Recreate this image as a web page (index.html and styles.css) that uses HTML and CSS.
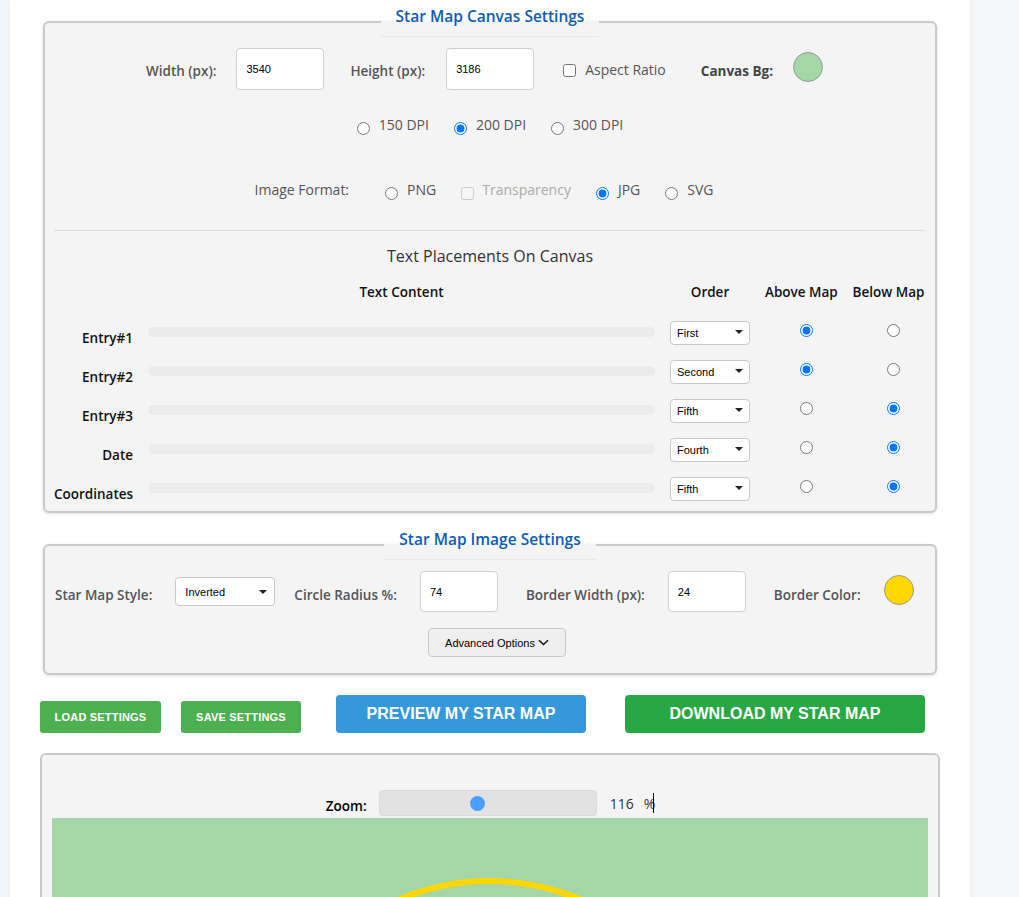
FILE: index.html
```html
<!DOCTYPE html>
<html>
<head>
<meta charset="utf-8">
<title>Star Map</title>
<link rel="stylesheet" href="styles.css">
</head>
<body>
<div class="page">
  <fieldset class="panel panel-canvas">
    <legend align="center">Star Map Canvas Settings</legend>
    <div class="row size-row">
      <label class="lbl strong" for="cw">Width (px):</label>
      <input class="num" id="cw" type="text" value="3540">
      <label class="lbl strong ml6" for="ch">Height (px):</label>
      <input class="num ml1" id="ch" type="text" value="3186">
      <label class="opt check ml9"><input type="checkbox"><span>Aspect Ratio</span></label>
      <span class="lbl bold ml15">Canvas Bg:</span>
      <span class="swatch swatch-green"></span>
    </div>
    <div class="row dpi-row">
      <label class="opt"><input type="radio" name="dpi"><span>150 DPI</span></label>
      <label class="opt"><input type="radio" name="dpi" checked><span>200 DPI</span></label>
      <label class="opt"><input type="radio" name="dpi"><span>300 DPI</span></label>
    </div>
    <div class="row format-row">
      <span class="lbl fmt-lbl">Image Format:</span>
      <label class="opt"><input type="radio" name="fmt"><span>PNG</span></label>
      <label class="opt disabled"><input type="checkbox" disabled><span>Transparency</span></label>
      <label class="opt"><input type="radio" name="fmt" checked><span>JPG</span></label>
      <label class="opt"><input type="radio" name="fmt"><span>SVG</span></label>
    </div>
    <hr class="divider">
    <h3 class="subtitle">Text Placements On Canvas</h3>
    <div class="placements">
      <div class="ph"></div>
      <div class="ph">Text Content</div>
      <div class="ph">Order</div>
      <div class="ph">Above Map</div>
      <div class="ph">Below Map</div>

      <div class="entry">Entry#1</div>
      <input class="bar" type="text">
      <div class="sel sel-sm"><select><option>First</option></select></div>
      <div class="rad"><input type="radio" name="p1" checked></div>
      <div class="rad"><input type="radio" name="p1"></div>

      <div class="entry">Entry#2</div>
      <input class="bar" type="text">
      <div class="sel sel-sm"><select><option>Second</option></select></div>
      <div class="rad"><input type="radio" name="p2" checked></div>
      <div class="rad"><input type="radio" name="p2"></div>

      <div class="entry">Entry#3</div>
      <input class="bar" type="text">
      <div class="sel sel-sm"><select><option>Fifth</option></select></div>
      <div class="rad"><input type="radio" name="p3"></div>
      <div class="rad"><input type="radio" name="p3" checked></div>

      <div class="entry">Date</div>
      <input class="bar" type="text">
      <div class="sel sel-sm"><select><option>Fourth</option></select></div>
      <div class="rad"><input type="radio" name="p4"></div>
      <div class="rad"><input type="radio" name="p4" checked></div>

      <div class="entry">Coordinates</div>
      <input class="bar" type="text">
      <div class="sel sel-sm"><select><option>Fifth</option></select></div>
      <div class="rad"><input type="radio" name="p5"></div>
      <div class="rad"><input type="radio" name="p5" checked></div>
    </div>
  </fieldset>

  <fieldset class="panel panel-image">
    <legend align="center">Star Map Image Settings</legend>
    <div class="row image-row">
      <span class="lbl strong">Star Map Style:</span>
      <div class="sel sel-lg"><select><option>Inverted</option></select></div>
      <span class="lbl strong">Circle Radius %:</span>
      <input class="num num-sm" type="text" value="74">
      <span class="lbl strong">Border Width (px):</span>
      <input class="num num-sm" type="text" value="24">
      <span class="lbl strong">Border Color:</span>
      <span class="swatch swatch-gold"></span>
    </div>
    <div class="row adv-row">
      <button class="adv-btn" type="button">Advanced Options
        <svg width="11" height="7" viewBox="0 0 11 7"><path d="M1 1.2 L5.5 5.6 L10 1.2" fill="none" stroke="#111" stroke-width="1.4"/></svg>
      </button>
    </div>
  </fieldset>

  <div class="actions">
    <button class="btn btn-sm" type="button">LOAD SETTINGS</button>
    <button class="btn btn-sm btn-save" type="button">SAVE SETTINGS</button>
    <button class="btn btn-lg btn-preview" type="button">PREVIEW MY STAR MAP</button>
    <button class="btn btn-lg btn-download" type="button">DOWNLOAD MY STAR MAP</button>
  </div>

  <div class="preview">
    <div class="zoom-row">
      <span class="zoom-lbl">Zoom:</span>
      <input class="zoom-range" type="range" min="25" max="228" value="116">
      <span class="zoom-val">116</span>
      <span class="zoom-pct">%</span><span class="caret"></span>
    </div>
    <div class="canvas">
      <svg width="876" height="700" viewBox="0 0 876 700">
        <circle cx="438" cy="297" r="234" fill="none" stroke="#ffd700" stroke-width="6"/>
      </svg>
    </div>
  </div>
</div>
</body>
</html>
```

FILE: styles.css
```css
* { box-sizing: border-box; }

html { overflow: hidden; }

body {
  margin: 0;
  background: #f5f6f8;
  font-family: "Open Sans", "Liberation Sans", sans-serif;
  color: #555;
}

.page {
  width: 960px;
  margin-left: 10px;
  min-height: 100vh;
  background: #fff;
  padding: 7px 30px 0;
  box-shadow: 0 0 6px rgba(0, 0, 0, 0.04);
}

.panel {
  margin: 0 3px;
  padding: 11px 0 2px;
  min-width: 0;
  border: 2px solid #cacaca;
  border-radius: 6px;
  background: #f4f4f4;
  box-shadow: 0 1px 3px rgba(0, 0, 0, 0.12);
}

.panel legend {
  margin: 0 auto;
  padding: 0 15px 11px;
  font-size: 15.5px;
  line-height: 18px;
  font-weight: 600;
  color: #0b5cb5;
  border-bottom: 1px solid #e8e8e8;
}

.panel-image { margin-top: 17px; padding-bottom: 16px; }

.row { display: flex; align-items: center; }

.lbl { font-size: 14px; color: #555; white-space: nowrap; }
.strong { font-weight: 600; font-size: 13.5px; margin-top: 3px; }
.bold { font-weight: 700; font-size: 13.5px; color: #444; margin-top: 3px; }

.ml1 { margin-left: 1px; }
.ml6 { margin-left: 6px; }
.ml9 { margin-left: 9px; }
.ml15 { margin-left: 15px; }

.num {
  width: 88px;
  height: 42px;
  border: 1px solid #cfcfcf;
  border-radius: 4px;
  background: #fff;
  padding: 0 9px;
  font: 11px "Liberation Sans", Arial, sans-serif;
  color: #000;
}
.num-sm { width: 78px; height: 41px; }

.swatch {
  width: 30px;
  height: 30px;
  border-radius: 50%;
  border: 1px solid #999;
}
.swatch-green { background: #a5d6a7; margin-top: -5px; }
.swatch-gold { background: #ffd700; margin-top: -3px; }

.size-row { height: 42px; gap: 20px; justify-content: center; padding-right: 11px; }

.opt {
  display: flex;
  align-items: center;
  gap: 9px;
  font-size: 14px;
  color: #555;
  white-space: nowrap;
}
.opt input { margin: 8px 0 0; width: 13px; height: 13px; }
.opt.check input { margin-top: 3px; }
.opt.disabled { color: #aaa; gap: 8px; }

.dpi-row { margin-top: 23px; height: 22px; gap: 25px; justify-content: center; }

.format-row { margin-top: 43px; height: 22px; gap: 25px; justify-content: center; padding-right: 12px; }
.fmt-lbl { margin-right: 11px; }

.divider {
  margin: 30px 10px 0 9px;
  border: 0;
  border-top: 1px solid #dcdcdc;
}

.subtitle {
  margin: 14px 0 0;
  font-size: 16px;
  line-height: 22px;
  font-weight: 400;
  color: #333;
  text-align: center;
}

.placements {
  margin: 13px 10px 0 9px;
  display: grid;
  grid-template-columns: 79px 507px 80px 72px 73px;
  grid-template-rows: 34px repeat(5, 39px);
  column-gap: 15px;
}

.ph {
  align-self: start;
  font-size: 13.5px;
  line-height: 24px;
  font-weight: 600;
  color: #111;
  text-align: center;
  white-space: nowrap;
}

.entry {
  align-self: center;
  margin-top: 8px;
  text-align: right;
  font-size: 13.5px;
  font-weight: 600;
  color: #111;
  white-space: nowrap;
}

.bar {
  align-self: center;
  margin-top: -4px;
  width: 100%;
  height: 10px;
  border: 0;
  border-radius: 5px;
  background: #ebebeb;
  padding: 0;
}

.sel { position: relative; align-self: center; }
.sel select {
  appearance: none;
  -webkit-appearance: none;
  width: 100%;
  height: 100%;
  border: 1px solid #c8c8c8;
  border-radius: 4px;
  background: #fff;
  font: 11px "Liberation Sans", Arial, sans-serif;
  color: #000;
  padding: 0 0 0 6px;
  margin: 0;
}
.sel::after {
  content: "";
  position: absolute;
  top: 50%;
  right: 7px;
  margin-top: -2px;
  border-left: 4px solid transparent;
  border-right: 4px solid transparent;
  border-top: 4px solid #222;
  pointer-events: none;
}
.sel-sm { width: 80px; height: 24px; margin-top: -4px; }
.sel-lg { width: 100px; height: 29px; margin-right: -4px; }
.sel-lg select { padding-left: 9px; }
.sel-lg::after { right: 8px; }

.rad {
  display: flex;
  justify-content: center;
  align-items: center;
  align-self: center;
  margin-top: -6px;
  padding-left: 10px;
}
.rad input { margin: 0; width: 13px; height: 13px; }

.image-row { height: 41px; gap: 23px; padding-left: 10px; }
.image-row .strong { margin-top: 6px; }
.image-row .num-sm { margin-right: 5px; }

.adv-row { margin-top: 16px; justify-content: center; padding-left: 14px; }
.adv-btn {
  display: inline-flex;
  align-items: center;
  justify-content: center;
  gap: 3px;
  width: 138px;
  height: 29px;
  border: 1px solid #c8c8c8;
  border-radius: 4px;
  background: #efefef;
  font: 11px "Liberation Sans", Arial, sans-serif;
  color: #000;
  padding: 0;
}

.actions {
  margin-top: 20px;
  display: flex;
  align-items: flex-end;
}

.btn {
  border: 0;
  color: #fff;
  font-family: "Liberation Sans", Arial, sans-serif;
  font-weight: 700;
  padding: 0;
}
.btn-sm {
  width: 121px;
  height: 32px;
  border-radius: 3px;
  background: #4caf50;
  font-size: 11px;
  letter-spacing: 0.2px;
  margin-right: 20px;
}
.btn-save { width: 120px; margin-right: 35px; }
.btn-lg { height: 38px; border-radius: 4px; font-size: 16px; }
.btn-preview { width: 250px; background: #3498db; margin-right: 39px; }
.btn-download { width: 300px; background: #28a745; }

.preview {
  margin-top: 20px;
  border: 2px solid #cacaca;
  border-radius: 6px;
  background: #f4f4f4;
  padding: 35px 10px 0;
  height: 900px;
}

.zoom-row {
  height: 26px;
  margin-bottom: 2px;
  display: flex;
  align-items: center;
  justify-content: center;
}
.zoom-lbl { font-size: 13.5px; font-weight: 600; color: #000; margin-top: 6px; margin-right: 12px; }
.zoom-range {
  -webkit-appearance: none;
  appearance: none;
  width: 218px;
  height: 26px;
  margin: 0 13px 0 0;
  border: 1px solid #d9d9d9;
  border-radius: 4px;
  background: #e2e2e2;
}
.zoom-range::-webkit-slider-runnable-track { height: 24px; background: transparent; }
.zoom-range::-webkit-slider-thumb {
  -webkit-appearance: none;
  width: 15px;
  height: 15px;
  margin-top: 4.5px;
  border-radius: 50%;
  border: 0;
  background: #4a9eff;
}
.zoom-val, .zoom-pct { font-size: 14px; color: #333; }
.zoom-pct { margin-left: 10px; }
.caret { width: 1px; height: 20px; background: #000; margin-left: -2px; }

.canvas {
  height: 700px;
  background: #a5d6a7;
  overflow: hidden;
}
.canvas svg { display: block; }
```
